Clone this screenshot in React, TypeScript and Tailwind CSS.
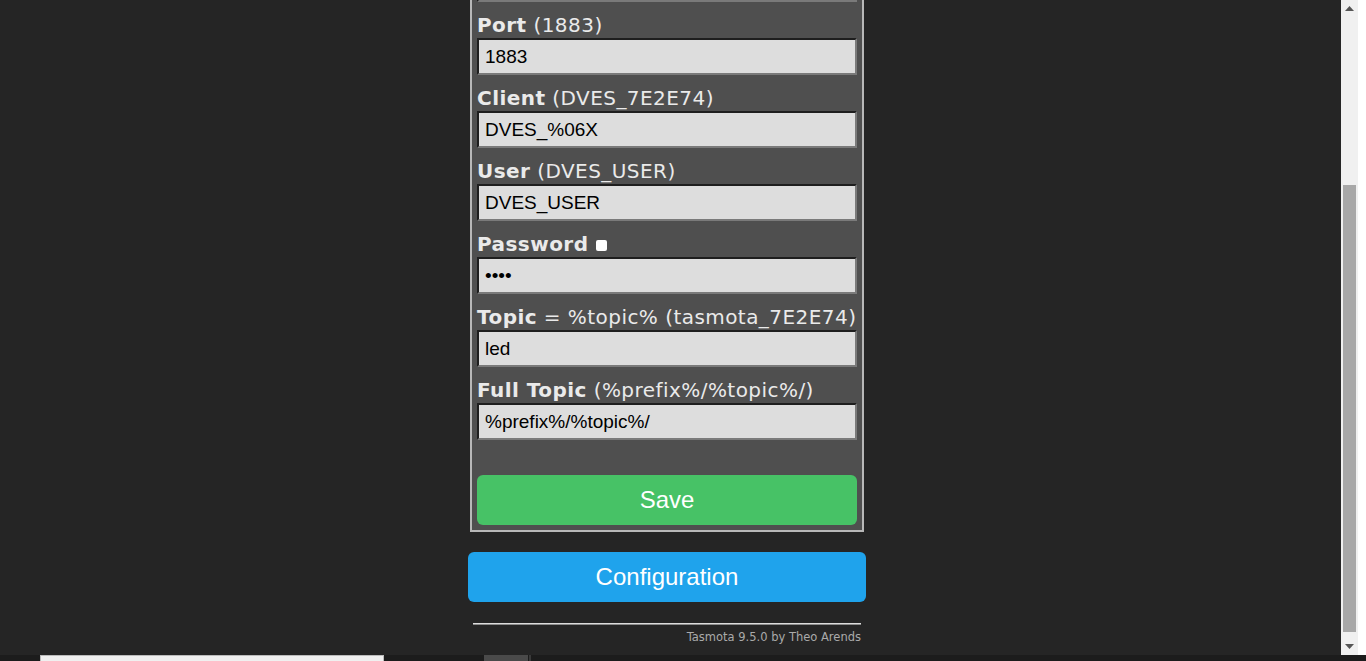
const fields = [
  { name: "Port", hint: " (1883)", value: "1883" },
  { name: "Client", hint: " (DVES_7E2E74)", value: "DVES_%06X" },
  { name: "User", hint: " (DVES_USER)", value: "DVES_USER" },
  { name: "Password", hint: "", value: "abcd", password: true },
  { name: "Topic", hint: " = %topic% (tasmota_7E2E74)", value: "led" },
  { name: "Full Topic", hint: " (%prefix%/%topic%/)", value: "%prefix%/%topic%/" },
];

const inputClass =
  "block h-[37px] w-full border-2 border-t-[#1e1e1e] border-l-[#1e1e1e] border-r-[#7a7a7a] border-b-[#7a7a7a] bg-[#dddddd] px-[6px] font-['Liberation_Sans',Arial,sans-serif] text-[19px] text-black outline-none";

function Field({ name, hint, value, password }: { name: string; hint: string; value: string; password?: boolean }) {
  return (
    <div className="mt-[11px]">
      <div className="h-[24px] whitespace-nowrap pt-px font-['DejaVu_Sans',Verdana,sans-serif] text-[20px] leading-[23px] tracking-[0.45px] text-[#eaeaea]">
        <b className="font-bold">{name}</b>
        {hint}
        {password && (
          <>
            {" "}
            <span className="ml-[1px] inline-block h-[11px] w-[11px] rounded-[2px] bg-white" aria-hidden="true" />
          </>
        )}
      </div>
      <input readOnly type={password ? "password" : "text"} value={value} className={`mt-px ${inputClass}`} />
    </div>
  );
}

function Scrollbar() {
  return (
    <div className="flex h-full w-[17px] flex-col bg-[#f0f0f0]">
      <div className="flex h-[17px] items-start justify-center pt-[6px]">
        <svg width="9" height="5" viewBox="0 0 9 5" aria-hidden="true">
          <path d="M4.5 0 L9 5 L0 5 Z" fill="#555" />
        </svg>
      </div>
      <div className="h-[168px]" />
      <div className="mx-[2px] h-[447px] bg-[#a8a8a8]" />
      <div className="flex-1" />
      <div className="flex h-[17px] items-end justify-center pb-[6px]">
        <svg width="9" height="5" viewBox="0 0 9 5" aria-hidden="true">
          <path d="M0 0 L9 0 L4.5 5 Z" fill="#555" />
        </svg>
      </div>
    </div>
  );
}

export default function App() {
  return (
    <div className="flex h-[661px] w-[1366px] flex-col overflow-hidden bg-[#252525]">
      <div className="flex h-[655px] overflow-hidden">
        <main className="h-full w-[1341px] overflow-hidden">
          <div className="ml-[468px] w-[398px]">
            <div className="mx-[2px] border-x-2 border-b-2 border-[#b8b8b8] bg-[#4f4f4f] px-[5px] pb-[5px]">
              <input readOnly value="" className={`-mt-[35px] ${inputClass}`} />
              {fields.map((f) => (
                <Field key={f.name} {...f} />
              ))}
              <button className="mt-[35px] block h-[50px] w-full rounded-[6px] bg-[#47c266] font-['Liberation_Sans',Arial,sans-serif] text-[24px] text-white">
                Save
              </button>
            </div>
            <button className="mt-[20px] block h-[50px] w-full rounded-[6px] bg-[#1fa3ec] font-['Liberation_Sans',Arial,sans-serif] text-[24px] text-white">
              Configuration
            </button>
            <div className="mx-[5px] mt-[21px] border-t border-b border-t-[#dcdcdc] border-b-[#8c8c8c]" />
            <p className="mt-[4px] pr-[5px] text-right font-['DejaVu_Sans',Verdana,sans-serif] text-[11.5px] leading-[16px] text-[#aaaaaa]">
              Tasmota 9.5.0 by Theo Arends
            </p>
          </div>
        </main>
        <Scrollbar />
        <div className="w-[8px] bg-white" />
      </div>
      <div className="flex h-[6px] items-stretch bg-[#1c1c1c]">
        <div className="ml-[40px] w-[344px] border-t border-l border-r border-[#bcbcbc] bg-[#f0f0f0]" />
        <div className="ml-[100px] w-[44px] bg-[#4a4a4a]" />
        <div className="ml-[1px] w-[2px] bg-[#3a3a3a]" />
      </div>
    </div>
  );
}
